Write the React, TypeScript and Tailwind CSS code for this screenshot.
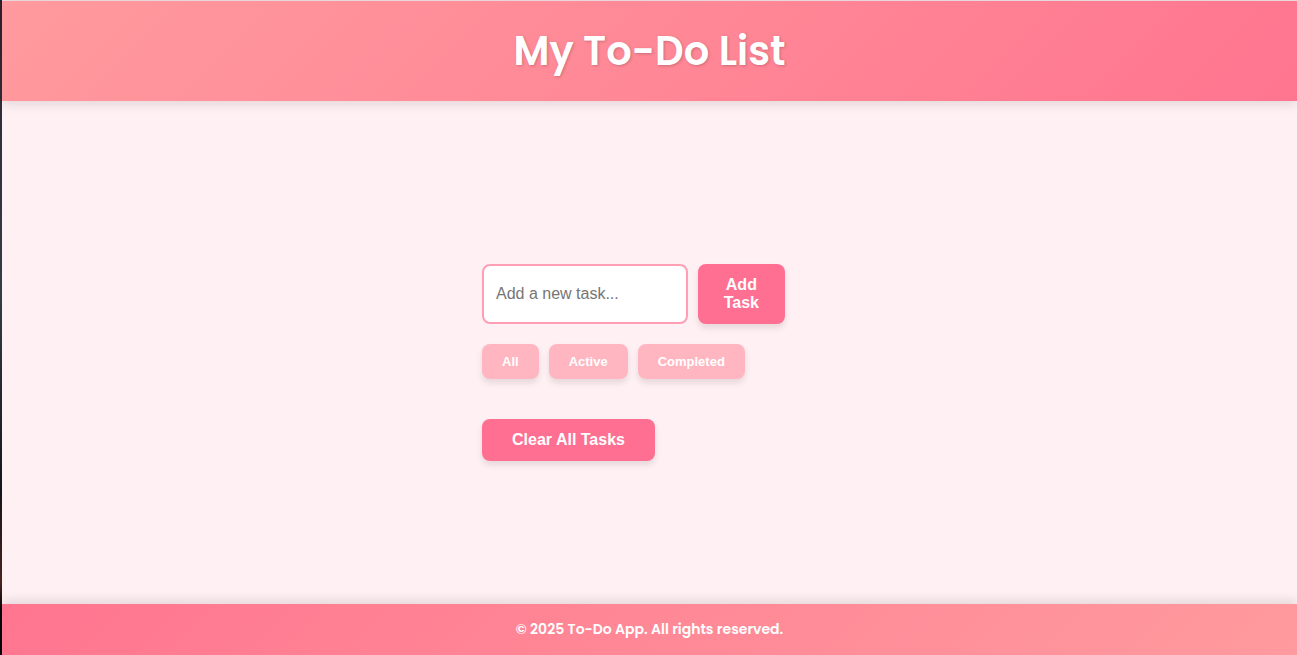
import { useState } from "react";

const filters = ["All", "Active", "Completed"] as const;

export default function App() {
  const [filter, setFilter] = useState<string>("");

  return (
    <div className="flex min-h-screen bg-[#fff0f3] font-['Liberation_Sans',Arial,sans-serif]">
      <div
        aria-hidden="true"
        className="w-0.5 shrink-0 bg-[linear-gradient(to_bottom,#30202c,#30303c_20%,#343c44_45%,#14161c_75%,#4a2420_89%,#08050a_93%)]"
      />
      <div className="flex min-w-0 flex-1 flex-col border-t border-[#ecdcdf]">
        <header className="relative bg-linear-135 from-[#ff9a9e] to-[#ff758f] p-5 text-center text-white shadow-[0_4px_10px_rgba(0,0,0,0.1)]">
          <h1 className="font-[Poppins,Inter,sans-serif] text-[40px] leading-[60px] font-semibold [text-shadow:1px_1px_3px_rgba(0,0,0,0.2)]">
            My To-Do List
          </h1>
        </header>

        <main className="flex flex-1 flex-col items-center justify-center pt-5">
          <div className="w-full max-w-[335px] pr-8">
            <form
              className="mb-5 flex gap-2.5"
              onSubmit={(event) => event.preventDefault()}
            >
              <input
                type="text"
                aria-label="New task"
                placeholder="Add a new task..."
                className="min-w-0 flex-1 rounded-lg border-2 border-[#ff9eb5] bg-white px-3 text-base outline-none placeholder:text-[#757575]"
              />
              <button
                type="submit"
                className="w-min rounded-lg bg-[#ff6f91] px-[26px] py-3 text-base leading-[18px] font-bold text-white shadow-[0_4px_6px_rgba(0,0,0,0.1)]"
              >
                Add Task
              </button>
            </form>

            <div className="mb-10 flex gap-2.5">
              {filters.map((name) => (
                <button
                  key={name}
                  type="button"
                  aria-pressed={filter === name}
                  onClick={() => setFilter(name)}
                  className="rounded-lg bg-[#ffb6c1] px-5 py-2.5 text-[13px] leading-[15px] font-bold text-white shadow-[0_4px_6px_rgba(0,0,0,0.1)]"
                >
                  {name}
                </button>
              ))}
            </div>

            <button
              type="button"
              className="rounded-lg bg-[#ff6f91] px-[30px] py-3 text-base leading-[18px] font-bold text-white shadow-[0_4px_6px_rgba(0,0,0,0.1)]"
            >
              Clear All Tasks
            </button>
          </div>
        </main>

        <footer className="bg-linear-135 from-[#ff758f] to-[#ff9a9e] p-[15px] text-center text-white shadow-[0_-4px_10px_rgba(0,0,0,0.1)]">
          <p className="font-[Poppins,Inter,sans-serif] text-sm leading-[21px] font-semibold">
            © 2025 To-Do App. All rights reserved.
          </p>
        </footer>
      </div>
    </div>
  );
}
